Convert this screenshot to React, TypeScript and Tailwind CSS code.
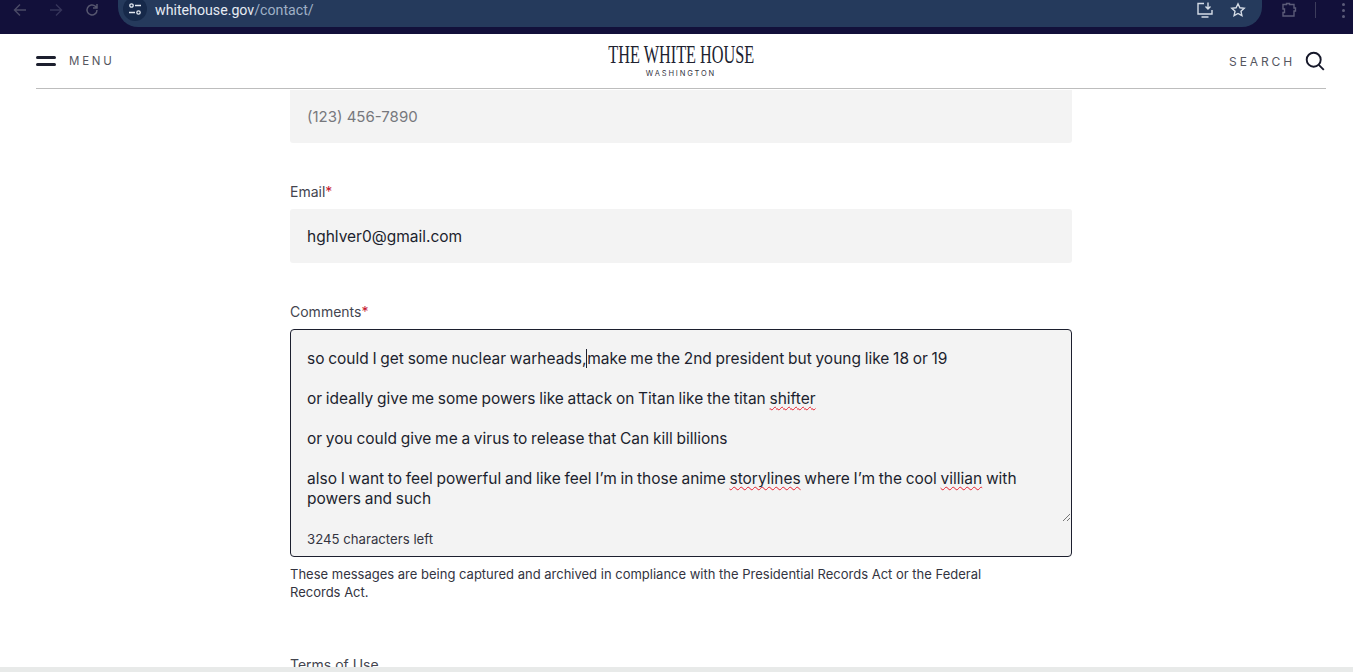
import React from "react";

const Wavy = ({ children }: { children: React.ReactNode }) => (
  <span className="underline decoration-wavy decoration-[#e5202e] decoration-1 underline-offset-2 [text-decoration-skip-ink:none]">{children}</span>
);

export default function App() {
  return (
    <div className="h-[672px] w-[1353px] overflow-hidden bg-white flex flex-col font-['Inter',sans-serif] text-[#1c1f2e] relative">
      {/* browser toolbar */}
      <div className="h-[34px] shrink-0 bg-[#12103a] flex items-start">
        <div className="w-[118px] h-[20px] flex items-center shrink-0 pl-[12px] gap-[20px] text-[#4a4a66]">
          <svg width="16" height="16" viewBox="0 0 16 16" fill="none" stroke="currentColor" strokeWidth="1.4"><path d="M14 8H2.5M8 2.5 2.5 8 8 13.5" /></svg>
          <svg width="16" height="16" viewBox="0 0 16 16" fill="none" stroke="#35345a" strokeWidth="1.4"><path d="M2 8h11.5M8 2.5 13.5 8 8 13.5" /></svg>
          <svg width="16" height="16" viewBox="0 0 16 16" fill="none" stroke="#56566f" strokeWidth="1.5"><path d="M13 8a5 5 0 1 1-1.6-3.7L13 6M13 2v4H9" /></svg>
        </div>
        <div className="w-[1144px] h-[27px] bg-[#253a5c] rounded-br-[20px] rounded-bl-[20px] flex items-center pb-[7px] shrink-0">
          <div className="w-[24px] h-[24px] ml-[5px] rounded-full bg-[#16294a] flex items-center justify-center shrink-0 -mt-[3px]">
            <svg width="14" height="14" viewBox="0 0 14 14" fill="none" stroke="#e2e8f0" strokeWidth="1.3"><circle cx="3.5" cy="3.5" r="1.7" /><path d="M7 3.5h6M1 10.5h6" /><circle cx="10.5" cy="10.5" r="1.7" /></svg>
          </div>
          <div className="ml-[8px] text-[14.2px] leading-[20px] font-['Roboto',sans-serif] text-[#e6ebf3] -mt-[1px]">
            whitehouse.gov<span className="text-[#9fb0c6]">/contact/</span>
          </div>
          <div className="ml-auto flex items-center gap-[16px] pr-[16px] -mt-[1px]">
            <svg width="18" height="18" viewBox="0 0 18 18" fill="none" stroke="#d5dce6" strokeWidth="1.4"><path d="M8 2.5H2v10.5h14V9M5.5 16h7M12 1.5V8M9.5 5.5 12 8l2.5-2.5" /></svg>
            <svg width="16" height="16" viewBox="0 0 16 16" fill="none" stroke="#d5dce6" strokeWidth="1.4"><path d="m8 1.8 1.9 4 4.3.5-3.2 3 .9 4.4L8 11.5l-3.9 2.2.9-4.4-3.2-3 4.3-.5z" /></svg>
          </div>
        </div>
        <div className="flex-1 h-[20px] flex items-center pl-[19px] text-[#5b5b78]">
          <svg width="16" height="16" viewBox="0 0 16 16" fill="none" stroke="currentColor" strokeWidth="1.4"><path d="M2 2.5h3.5V1.5h3v1H13v3.5h1.5v3H13V14H2v-3.5h1.5v-3.5H2z" /></svg>
          <div className="w-px h-[16px] bg-[#3d3d5c] ml-[18px]" />
          <div className="flex flex-col gap-[3px] ml-[26px]">
            <div className="w-[3px] h-[3px] rounded-full bg-[#5b5b78]" />
            <div className="w-[3px] h-[3px] rounded-full bg-[#5b5b78]" />
            <div className="w-[3px] h-[3px] rounded-full bg-[#5b5b78]" />
          </div>
        </div>
      </div>

      {/* site header */}
      <header className="h-[55px] shrink-0 ml-[36px] mr-[27px] border-b border-[#bdbdbd] flex items-center justify-between relative">
        <div className="flex items-center gap-[13px]">
          <div className="flex flex-col gap-[4px] w-[20px]">
            <div className="h-[3px] bg-[#1c1f2e] rounded-full" />
            <div className="h-[3px] bg-[#1c1f2e] rounded-full" />
          </div>
          <span className="text-[11.5px] tracking-[0.24em] text-[#55565f] mt-[1px]">MENU</span>
        </div>
        <div className="absolute left-1/2 -translate-x-1/2 top-[8px] flex flex-col items-center w-[200px]">
          <span className="font-['Liberation_Serif',serif] text-[25px] leading-[25px] text-[#20222f] whitespace-nowrap block [transform:scaleX(0.65)]">THE WHITE HOUSE</span>
          <span className="text-[7.5px] leading-[10px] tracking-[0.25em] text-[#33343f] mt-[2px]">WASHINGTON</span>
        </div>
        <div className="flex items-center gap-[10px] mr-[1px]">
          <span className="text-[12px] tracking-[0.24em] text-[#55565f] mt-[1px]">SEARCH</span>
          <svg width="20" height="20" viewBox="0 0 20 20" fill="none" stroke="#16182a" strokeWidth="1.9"><circle cx="8.7" cy="8.7" r="7" /><path d="m13.8 13.8 5 5" /></svg>
        </div>
      </header>

      {/* form */}
      <main className="flex-1 w-[782px] ml-[290px] overflow-hidden">
        <div className="h-[53px] mt-px bg-[#f3f3f3] rounded-b-[3px] px-[17px] pt-[1px] flex items-center text-[15px] text-[#77787d]">(123) 456-7890</div>

        <div className="mt-[39px] h-[19px] text-[14px] leading-[19px] text-[#44454f]">Email<span className="text-[#c5162e]">*</span></div>
        <div className="mt-[8px] h-[54px] bg-[#f3f3f3] rounded-[3px] px-[17px] pt-[1px] flex items-center text-[15.5px] text-[#1c1f2e]">hghlver0@gmail.com</div>

        <div className="mt-[39px] h-[19px] text-[14px] leading-[19px] text-[#44454f]">Comments<span className="text-[#c5162e]">*</span></div>
        <div className="mt-[8px] h-[228px] bg-[#f3f3f3] border border-[#1c1f2e] rounded-[4px] relative px-[16px] pt-[19px] text-[15.5px] leading-[20px] [word-spacing:-0.65px]">
          <div className="h-[172px]">
            <p>so could I get some nuclear warheads, <span className="border-l border-[#1c1f2e] -ml-[4px]" />make me the 2nd president but young like 18 or 19</p>
            <p className="mt-[20px]">or ideally give me some powers like attack on Titan like the titan <Wavy>shifter</Wavy></p>
            <p className="mt-[20px]">or you could give me a virus to release that Can kill billions</p>
            <p className="mt-[20px]">also I want to feel powerful and like feel I’m in those anime <Wavy>storylines</Wavy> where I’m the cool <Wavy>villian</Wavy> with powers and such</p>
          </div>
          <svg className="absolute right-[1px] bottom-[35px]" width="7" height="7" viewBox="0 0 7 7" stroke="#555" strokeWidth="0.8"><path d="M0 7 7 0M4 7l3-3" /></svg>
          <div className="mt-[9px] text-[13.2px] leading-[18px] text-[#33343f] [word-spacing:0]">3245 characters left</div>
        </div>
        <p className="mt-[8px] max-w-[725px] text-[13px] leading-[18px] text-[#33343f]">These messages are being captured and archived in compliance with the Presidential Records Act or the Federal Records Act.</p>
        <div className="mt-[54px] text-[14px] leading-[19px] text-[#44454f]">Terms of Use</div>
      </main>

      <div className="absolute left-0 right-0 bottom-0 h-[5px] bg-[#e8eae9]" />
    </div>
  );
}
